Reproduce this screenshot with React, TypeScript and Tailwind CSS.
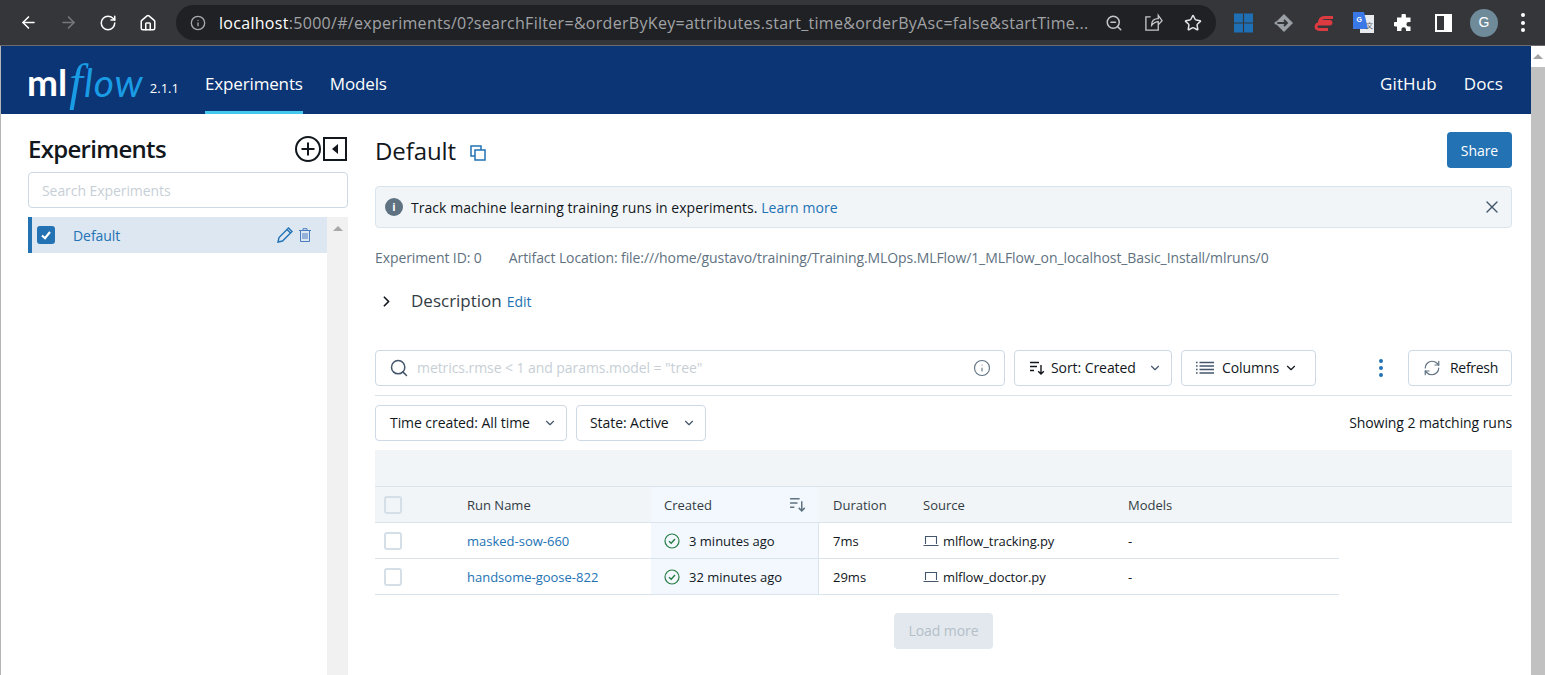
import React from 'react';
import {
  ArrowLeft,
  ArrowRight,
  ChevronDown,
  ChevronRight,
  Home,
  Info,
  RefreshCw,
  RotateCw,
  Search,
  Star,
  X,
  ZoomOut,
} from 'lucide-react';

const SortIcon = ({ className }: { className?: string }) => (
  <svg viewBox="0 0 16 16" className={className} fill="none" stroke="currentColor" strokeWidth="1.4">
    <path d="M1 2.5h9M1 6.5h7M1 10.5h4M12 5v9M9.2 11.2 12 14l2.8-2.8" />
  </svg>
);

const ListIcon = ({ className }: { className?: string }) => (
  <svg viewBox="0 0 18 14" className={className} fill="none" stroke="currentColor" strokeWidth="1.3">
    <path d="M0 1.5h1.6M0 5h1.6M0 8.5h1.6M0 12h1.6M3.5 1.5H18M3.5 5H18M3.5 8.5H18M3.5 12H18" />
  </svg>
);

const CheckCircle = () => (
  <svg viewBox="0 0 16 16" className="w-4 h-4 text-[#277c43]" fill="none" stroke="currentColor" strokeWidth="1.2">
    <circle cx="8" cy="8" r="7" />
    <path d="M5 8.2 7.2 10.3 11 6" strokeWidth="1.4" />
  </svg>
);

const LaptopIcon = () => (
  <svg viewBox="0 0 16 12" className="w-4 h-3 text-[#44566c]" fill="none" stroke="currentColor" strokeWidth="1.1">
    <path d="M2.5 9V1.5h11V9M.5 10.5h15" />
  </svg>
);

const Caret = () => <ChevronDown className="w-[14px] h-[14px] text-[#44566c]" strokeWidth={2} />;

const RunRow = ({ name, created, duration, source }: { name: string; created: string; duration: string; source: string }) => (
  <div className="flex h-9 w-[964px] items-center border-b border-[#d9e4ec] text-[13px] tracking-normal text-[#11171c]">
    <div className="w-[92px] pl-[9px]">
      <div className="w-[18px] h-[18px] rounded-[3px] border-2 border-[#d5dfe8] bg-white" />
    </div>
    <a className="w-[184px] pt-[2px] text-[#2272b4]">{name}</a>
    <div className="flex w-[168px] h-full items-center gap-[9px] bg-[#f2f8fd] pl-[13px] border-r border-[#d9e4ec]">
      <CheckCircle />
      <span className="pt-[2px]">{created}</span>
    </div>
    <div className="w-[104px] pl-[14px] pt-[2px]">{duration}</div>
    <div className="flex w-[205px] items-center gap-[4px]">
      <LaptopIcon />
      <span className="pt-[2px] tracking-[-0.1px]">{source}</span>
    </div>
    <div className="pt-[2px]">-</div>
  </div>
);

export default function App() {
  return (
    <div className="flex h-[675px] w-[1545px] flex-col overflow-hidden bg-white font-['Open_Sans',sans-serif] tracking-[-0.07px] text-[#11171c]">
      {/* Browser chrome */}
      <div className="flex h-[46px] shrink-0 items-center border-b border-[#6a6b6e] bg-[#35363a] pl-[19px]">
        <ArrowLeft className="h-[19px] w-[19px] text-white" strokeWidth={2} />
        <ArrowRight className="ml-[21px] h-[19px] w-[19px] text-[#77787b]" strokeWidth={2} />
        <RotateCw className="ml-[21px] h-[18px] w-[18px] text-white" strokeWidth={2} />
        <Home className="ml-[22px] h-[18px] w-[18px] text-white" strokeWidth={2} />
        <div className="ml-[19px] flex h-[35px] w-[1040px] items-center rounded-full bg-[#202124] pl-[14px] pr-[14px]">
          <Info className="h-4 w-4 text-[#a9abad]" strokeWidth={2} />
          <span className="ml-[13px] flex-1 text-[16px] tracking-[0.3px] text-[#a0a3a6]">
            <span className="text-white">localhost</span>:5000/#/experiments/0?searchFilter=&amp;orderByKey=attributes.start_time&amp;orderByAsc=false&amp;startTime...
          </span>
          <ZoomOut className="h-[18px] w-[18px] text-[#c4c6c8]" strokeWidth={2} />
          <svg viewBox="0 0 20 20" className="ml-[21px] h-[19px] w-[19px] text-[#c4c6c8]" fill="none" stroke="currentColor" strokeWidth="1.4">
            <path d="M7 4H2v14h13v-5M8 13c0-5 3-7 7-7V2.5l4 5.5-4 4.5V9c-3 0-5 1.500-7 4Z" />
          </svg>
          <Star className="ml-[21px] h-[18px] w-[18px] text-[#e3e4e5]" strokeWidth={2} />
        </div>
        <svg viewBox="0 0 20 20" className="ml-[18px] h-[20px] w-[19px]">
          <rect width="20" height="20" fill="#1f6fb5" />
          <path d="M10 0v20M0 10h20" stroke="#35363a" strokeWidth="1.2" />
        </svg>
        <svg viewBox="0 0 20 20" className="ml-[21px] h-[20px] w-[20px]">
          <path d="M10 1 19 10 10 19 1 10Z" fill="#9aa0a6" />
          <path d="M2 10h11M10 7l3 3-3 3" fill="none" stroke="#35363a" strokeWidth="1.8" />
          <circle cx="2" cy="10" r="1.500" fill="#9aa0a6" />
        </svg>
        <svg viewBox="0 0 20 16" className="ml-[20px] h-[16px] w-[20px]">
          <path d="M19 2.500H11C8 2.500 6 4.500 5.500 6.500H15.500C17.500 6.500 17.500 9 15.500 9H4.500C3 9 2 10 2 11.500 2 13.500 3.500 14.500 5.500 14.500H14" fill="none" stroke="#de3a41" strokeWidth="2.800" />
        </svg>
        <svg viewBox="0 0 21 21" className="ml-[19px] h-[21px] w-[21px]">
          <rect x="7" y="3" width="14" height="18" fill="#e8eaed" />
          <path d="M0 0h11l4 17H0Z" fill="#3b78e7" />
          <text x="3.500" y="10" fontSize="7" fontWeight="700" fill="#fff" fontFamily="Liberation Sans">G</text>
          <text x="13" y="16" fontSize="7" fill="#5f6368" fontFamily="Noto Sans CJK SC">文</text>
        </svg>
        <svg viewBox="0 0 18 18" className="ml-[20px] h-[18px] w-[19px]" fill="#fff">
          <path d="M7 1.500a2.200 2.200 0 0 1 4.400 0V3.500H16V8h-1.800a2.300 2.300 0 0 0 0 4.600H16V17H11.500v-1.500a2.300 2.300 0 0 0-4.600 0V17H2.500v-4.500H1a2.300 2.300 0 0 1 0-4.600h1.500V3.500H7Z" />
        </svg>
        <div className="ml-[22px] flex h-[18px] w-[17px] justify-end border-2 border-white">
          <div className="h-full w-[6px] bg-white" />
        </div>
        <div className="ml-[18px] flex h-7 w-7 items-center justify-center rounded-full bg-[#6f8b99] font-['Liberation_Sans',sans-serif] text-[14px] tracking-normal text-white">G</div>
        <div className="ml-[23px] flex flex-col gap-[3.500px]">
          <div className="h-[4px] w-[4px] rounded-full bg-white" />
          <div className="h-[4px] w-[4px] rounded-full bg-white" />
          <div className="h-[4px] w-[4px] rounded-full bg-white" />
        </div>
      </div>

      <div className="flex min-h-0 flex-1">
        <div className="flex min-w-0 flex-1 flex-col border-l border-[#b5b5b5]">
          {/* App header */}
          <header className="flex h-[68px] shrink-0 items-center bg-[#0b3574] pl-[26px] pr-[28px] text-white">
            <div className="flex w-[178px] items-end pt-[3px]">
              <span className="font-['Lato',sans-serif] text-[37px] font-bold leading-[30px]">ml</span>
              <span className="ml-[2px] font-['Liberation_Serif',serif] text-[50px] italic leading-[30px] text-[#1a9be6]">f</span>
              <span className="ml-[1px] font-['Lato',sans-serif] text-[39px] italic leading-[30px] tracking-[1px] text-[#1a9be6]">low</span>
              <span className="ml-[6px] text-[13px] leading-[18px] tracking-normal">2.1.1</span>
            </div>
            <nav className="flex h-full items-center gap-[27px] text-[17px] tracking-[-0.15px]">
              <span className="flex h-full items-center border-b-[3px] border-[#43c9ed] pt-[10px]">Experiments</span>
              <span className="pt-[7px]">Models</span>
            </nav>
            <div className="ml-auto flex gap-[27px] pt-[7px] text-[17px] tracking-[0.1px]">
              <span>GitHub</span>
              <span>Docs</span>
            </div>
          </header>

          <div className="flex min-h-0 flex-1">
            {/* Experiment list */}
            <aside className="ml-[27px] flex w-[320px] shrink-0 flex-col">
              <div className="flex h-[58px] items-center justify-between pt-[12px]">
                <h1 className="text-[24px] font-semibold tracking-[-0.7px]">Experiments</h1>
                <div className="mr-[1px] flex items-center gap-[2px]">
                  <svg viewBox="0 0 26 26" className="h-[26px] w-[26px]" fill="none" stroke="#11171c" strokeWidth="2">
                    <circle cx="13" cy="13" r="12" />
                    <path d="M13 6.500v13M6.500 13h13" />
                  </svg>
                  <div className="flex h-[24px] w-[24px] items-center justify-center border-2 border-[#11171c]">
                    <div className="h-0 w-0 border-y-[5px] border-r-[6px] border-y-transparent border-r-[#11171c]" />
                  </div>
                </div>
              </div>
              <div className="flex h-9 items-center rounded border border-[#cdd9e5] pl-[13px] text-[14px] text-[#c7cfd6]">Search Experiments</div>
              <div className="mt-[9px] flex min-h-0 flex-1">
                <div className="flex h-9 w-[299px] items-center border-l-4 border-[#2272b4] bg-[#dce7f2] pl-[5px]">
                  <div className="flex h-[18px] w-[18px] items-center justify-center rounded-[3px] bg-[#2272b4]">
                    <svg viewBox="0 0 12 12" className="h-3 w-3" fill="none" stroke="#fff" strokeWidth="2.200">
                      <path d="M2 6.500 5 9.200 10 3" />
                    </svg>
                  </div>
                  <span className="ml-[18px] flex-1 text-[14px] text-[#2272b4]">Default</span>
                  <svg viewBox="0 0 16 16" className="h-4 w-4 text-[#2272b4]" fill="none" stroke="currentColor" strokeWidth="1.400">
                    <path d="M1 15l1-4.500L11.500 1 15 4.500 5.500 14ZM10 2.500 13.500 6" />
                  </svg>
                  <svg viewBox="0 0 12 14" className="ml-[6px] mr-[16px] h-[14px] w-[12px] text-[#4a7cc0]" fill="none" stroke="currentColor" strokeWidth="1">
                    <path d="M0 2.500h12M4 2.500V.7h4v1.800M1.500 2.500v11h9v-11M4 5v6M6 5v6M8 5v6" />
                  </svg>
                </div>
                <div className="flex w-[21px] justify-center bg-[#f1f1f1] pt-[9px]">
                  <div className="h-0 w-0 border-x-[5px] border-b-[5px] border-x-transparent border-b-[#a8a8a8]" />
                </div>
              </div>
            </aside>

            {/* Experiment page */}
            <main className="ml-[27px] mr-[19px] flex min-w-0 flex-1 flex-col">
              <div className="flex h-[72px] items-center justify-between">
                <div className="flex items-center gap-[14px]">
                  <h2 className="pt-[2px] text-[24px] font-medium tracking-[-0.1px]">Default</h2>
                  <svg viewBox="0 0 16 16" className="mt-[5px] h-4 w-4 text-[#2272b4]" fill="none" stroke="currentColor" strokeWidth="1.500">
                    <rect x="1" y="1" width="10" height="10" />
                    <rect x="5" y="5" width="10" height="10" fill="#fff" />
                  </svg>
                </div>
                <button className="flex h-9 w-[65px] items-center justify-center rounded bg-[#2272b4] text-[14px] text-white">Share</button>
              </div>

              <div className="flex h-[42px] items-center rounded border border-[#d9e4ec] bg-[#f1f5f8] pl-[9px] pr-[9px] text-[14px] tracking-[0.05px]">
                <div className="flex h-[18px] w-[18px] items-center justify-center rounded-full bg-[#5f7281] text-[11px] font-bold text-white">i</div>
                <span className="ml-[8px]">Track machine learning training runs in experiments. <a className="text-[#2272b4]">Learn more</a></span>
                <X className="ml-auto h-[20px] w-[20px] text-[#44566c]" strokeWidth={1.600} />
              </div>

              <div className="mt-[19px] flex gap-[27px] text-[14px] tracking-[-0.09px] text-[#5f7281]">
                <span>Experiment ID: 0</span>
                <span>Artifact Location: file:///home/gustavo/training/Training.MLOps.MLFlow/1_MLFlow_on_localhost_Basic_Install/mlruns/0</span>
              </div>

              <div className="mt-[19px] flex h-7 items-center">
                <ChevronRight className="ml-[3px] h-[17px] w-[17px]" strokeWidth={2.400} />
                <span className="ml-[16px] text-[17px] tracking-normal text-[#333c44]">Description</span>
                <a className="ml-[5px] text-[14px] text-[#2272b4]">Edit</a>
              </div>

              {/* Search and controls */}
              <div className="mt-[35px] flex h-9 items-center text-[14px]">
                <div className="flex h-full w-[630px] items-center rounded border border-[#cdd9e5] pl-[13px] pr-[13px]">
                  <Search className="h-[20px] w-[20px] text-[#44566c]" strokeWidth={1.800} />
                  <span className="ml-[8px] -mt-[2px] flex-1 text-[#c7cfd6]">metrics.rmse &lt; 1 and params.model = "tree"</span>
                  <Info className="h-[18px] w-[18px] text-[#5f7281]" strokeWidth={1.500} />
                </div>
                <div className="ml-[9px] flex h-full w-[158px] items-center rounded border border-[#cdd9e5] pl-[14px]">
                  <SortIcon className="h-4 w-4 text-[#11171c]" />
                  <span className="ml-[6px] -mt-[2px] flex-1">Sort: Created</span>
                  <span className="mr-[9px]"><Caret /></span>
                </div>
                <div className="ml-[9px] flex h-full w-[135px] items-center rounded border border-[#cdd9e5] pl-[14px]">
                  <ListIcon className="h-[14px] w-[18px] text-[#44566c]" />
                  <span className="ml-[8px] -mt-[2px]">Columns</span>
                  <ChevronDown className="ml-[5px] h-[14px] w-[14px] text-[#11171c]" strokeWidth={2} />
                </div>
                <div className="ml-[63px] flex flex-col gap-[3px]">
                  <div className="h-1 w-1 rounded-full bg-[#2272b4]" />
                  <div className="h-1 w-1 rounded-full bg-[#2272b4]" />
                  <div className="h-1 w-1 rounded-full bg-[#2272b4]" />
                </div>
                <div className="ml-auto flex h-full w-[104px] items-center rounded border border-[#cdd9e5] pl-[14px]">
                  <RefreshCw className="h-[18px] w-[18px] text-[#5f7281]" strokeWidth={1.600} />
                  <span className="ml-[9px] -mt-[2px] tracking-[-0.3px]">Refresh</span>
                </div>
              </div>

              <div className="mt-[9px] border-t border-[#d9e4ec]" />

              <div className="mt-[9px] flex h-9 items-center text-[14px]">
                <div className="flex h-full w-[192px] items-center justify-between rounded border border-[#cdd9e5] pl-[14px] pr-[9px]">
                  <span className="-mt-[2px]">Time created: All time</span>
                  <Caret />
                </div>
                <div className="ml-[9px] flex h-full w-[130px] items-center justify-between rounded border border-[#cdd9e5] pl-[13px] pr-[9px]">
                  <span className="-mt-[2px]">State: Active</span>
                  <Caret />
                </div>
                <span className="ml-auto -mt-[2px]">Showing 2 matching runs</span>
              </div>

              {/* Runs table */}
              <div className="mt-[9px] h-[37px] border-b border-[#d9e4ec] bg-[#f1f5f8]" />
              <div className="flex h-[35px] items-center bg-[#f1f5f8] text-[13px] font-medium tracking-normal text-[#333c44]">
                <div className="w-[92px] pl-[9px]">
                  <div className="h-[18px] w-[18px] rounded-[3px] border-2 border-[#d5dfe8] bg-[#f1f5f8]" />
                </div>
                <div className="w-[184px] pt-[2px]">Run Name</div>
                <div className="flex h-full w-[168px] items-center justify-between bg-[#f2f8fd] pl-[13px] pr-[13px]">
                  <span className="pt-[2px]">Created</span>
                  <SortIcon className="h-[17px] w-[17px] text-[#5f7281]" />
                </div>
                <div className="w-[104px] pl-[14px] pt-[2px]">Duration</div>
                <div className="w-[205px] pt-[2px]">Source</div>
                <div className="pt-[2px]">Models</div>
              </div>
              <div className="border-t border-[#d9e4ec]" />
              <RunRow name="masked-sow-660" created="3 minutes ago" duration="7ms" source="mlflow_tracking.py" />
              <RunRow name="handsome-goose-822" created="32 minutes ago" duration="29ms" source="mlflow_doctor.py" />

              <div className="mt-[18px] flex w-[1137px] justify-center">
                <button className="h-9 w-[99px] rounded bg-[#e2e8ee] pb-[2px] text-[14px] text-[#b5bfc8]">Load more</button>
              </div>
            </main>
          </div>
        </div>

        {/* Window scrollbar */}
        <div className="flex w-[14px] shrink-0 flex-col bg-white">
          <div className="flex h-[21px] justify-center pt-[8px]">
            <div className="h-0 w-0 border-x-[5px] border-b-[5px] border-x-transparent border-b-[#a3a3a3]" />
          </div>
          <div className="flex-1 bg-[#c1c1c1]" />
        </div>
      </div>
    </div>
  );
}
